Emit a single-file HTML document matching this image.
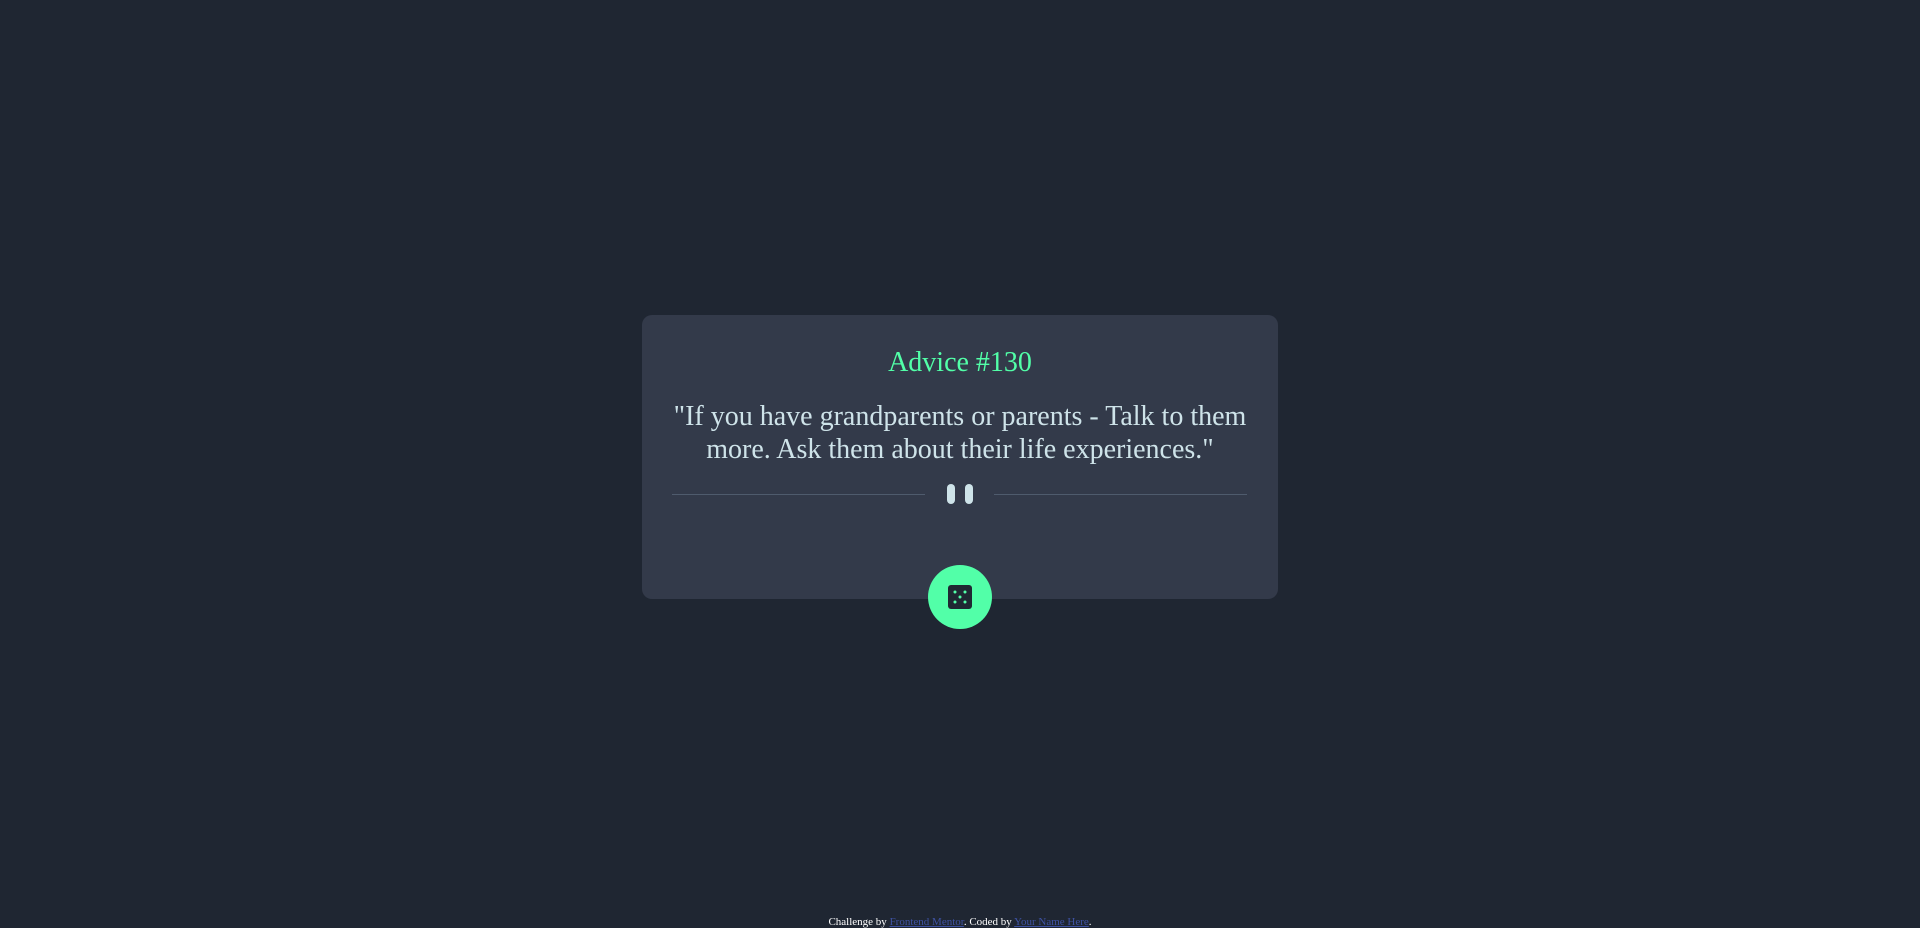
<!DOCTYPE html>
<html><head><meta charset="utf-8"><style>
html,body{margin:0;padding:0;width:1920px;height:927px;background:#1f2632;overflow:hidden;font-family:"Liberation Serif",serif;}
.card{position:absolute;left:642px;top:315px;width:636px;height:284px;background:#333a4a;border-radius:10px;text-align:center;}
.t{position:absolute;left:0;right:0;top:345px;color:#52ffa8;font-size:28px;text-align:center;line-height:36px;}
.q{position:absolute;left:640px;width:640px;top:400px;color:#cee3e9;font-size:28px;line-height:33px;text-align:center;}
.l{position:absolute;top:494px;height:1px;background:#4f5b6d;}
.b{position:absolute;top:484px;width:8px;height:20px;border-radius:4px;background:#cee3e9;}
.btn{position:absolute;left:928px;top:565px;width:64px;height:64px;border-radius:50%;background:#52ffa8;}
.f{position:absolute;left:0;right:0;top:916px;font-size:11px;color:#fff;text-align:center;}
.f a{color:#3e52a3;text-decoration:underline;}
</style></head><body>
<div class="card"></div>
<div class="t">Advice #130</div>
<div class="q">"If you have grandparents or parents - Talk to them more. Ask them about their life experiences."</div>
<div class="l" style="left:672px;width:253px"></div>
<div class="l" style="left:994px;width:253px"></div>
<div class="b" style="left:947px"></div>
<div class="b" style="left:965px"></div>
<div class="btn"><svg width="24" height="24" viewBox="0 0 24 24" style="position:absolute;left:20px;top:20px"><rect x="0" y="0" width="24" height="24" rx="3" fill="#202733"/><circle cx="7" cy="7" r="1.5" fill="#52ffa8"/><circle cx="17" cy="7" r="1.5" fill="#52ffa8"/><circle cx="12" cy="12" r="1.5" fill="#52ffa8"/><circle cx="7" cy="17" r="1.5" fill="#52ffa8"/><circle cx="17" cy="17" r="1.5" fill="#52ffa8"/></svg></div>
<div class="f">Challenge by <a>Frontend Mentor</a>. Coded by <a>Your Name Here</a>.</div>
</body></html>
